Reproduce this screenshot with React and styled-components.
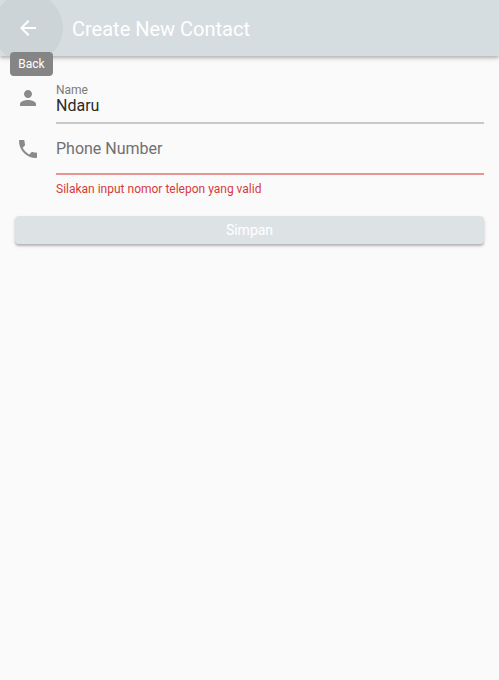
import React from "react";
import styled, { createGlobalStyle } from "styled-components";

const GlobalStyle = createGlobalStyle`
  * { box-sizing: border-box; }
  body { margin: 0; background: #fafafa; font-family: Roboto, sans-serif; }
`;

const Page = styled.div`
  min-height: 680px;
  background: #fafafa;
  overflow: hidden;
`;

const AppBar = styled.header`
  position: relative;
  display: flex;
  align-items: center;
  height: 56px;
  background: #d5dde0;
  box-shadow: 0 2px 3px rgba(0, 0, 0, 0.22), 0 3px 6px rgba(0, 0, 0, 0.08);
`;

const BarClip = styled.div`
  position: absolute;
  inset: 0;
  overflow: hidden;
`;

const Ripple = styled.span`
  position: absolute;
  left: -7px;
  top: -7px;
  width: 70px;
  height: 70px;
  border-radius: 50%;
  background: #ccd4d7;
`;

const BackButton = styled.button`
  position: relative;
  display: flex;
  align-items: center;
  justify-content: center;
  width: 56px;
  height: 56px;
  padding: 0;
  border: 0;
  background: none;
  color: #fff;
`;

const Title = styled.h1`
  position: relative;
  margin: 2px 0 0 16px;
  font-size: 20px;
  line-height: 24px;
  font-weight: 400;
  color: #fff;
`;

const Tooltip = styled.span`
  position: absolute;
  left: 10px;
  top: 52px;
  width: 43px;
  height: 24px;
  border-radius: 4px;
  background: #858585;
  color: #fff;
  font-size: 12px;
  line-height: 24px;
  text-align: center;
`;

const Form = styled.form`
  display: flex;
  flex-direction: column;
  padding: 26px 15px 0 16px;
`;

const Field = styled.div`
  display: grid;
  grid-template-columns: 24px 1fr;
  column-gap: 16px;
  height: ${(p) => p.$height};
`;

const FieldIcon = styled.span`
  display: flex;
  height: 24px;
  margin-top: 4px;
  color: #8a8a8a;
`;

const FieldBody = styled.div`
  display: flex;
  flex-direction: column;
`;

const InputBox = styled.div`
  display: flex;
  flex-direction: column;
  height: 42px;
  border-bottom: 2px solid ${(p) => p.$line};
`;

const Label = styled.label`
  font-size: 12px;
  line-height: 16px;
  color: #7a7a7a;
`;

const Value = styled.span`
  font-size: 16px;
  line-height: 16px;
  color: #2a2a2a;
`;

const Placeholder = styled.span`
  padding-top: 6px;
  font-size: 16px;
  line-height: 20px;
  color: #707070;
`;

const ErrorText = styled.p`
  margin: 6px 0 0;
  font-size: 12px;
  line-height: 16px;
  color: #d63a3a;
`;

const SaveButton = styled.button`
  height: 28px;
  margin-left: -1px;
  padding: 0;
  border: 0;
  border-radius: 4px;
  background: #dde3e5;
  color: #fff;
  font: 400 14px/28px Roboto, sans-serif;
  box-shadow: 0 2px 2px rgba(0, 0, 0, 0.2), 0 2px 4px rgba(0, 0, 0, 0.1);
`;

const Icon = ({ d }) => (
  <svg width="24" height="24" viewBox="0 0 24 24" fill="currentColor" aria-hidden="true">
    <path d={d} />
  </svg>
);

const ARROW = "M20 11H7.83l5.59-5.59L12 4l-8 8 8 8 1.41-1.41L7.83 13H20v-2z";
const PERSON =
  "M12 12c2.21 0 4-1.79 4-4s-1.79-4-4-4-4 1.79-4 4 1.79 4 4 4zm0 2c-2.67 0-8 1.34-8 4v2h16v-2c0-2.66-5.33-4-8-4z";
const PHONE =
  "M6.62 10.79c1.44 2.83 3.76 5.14 6.59 6.59l2.2-2.2c.27-.27.67-.36 1.02-.24 1.12.37 2.33.57 3.57.57.55 0 1 .45 1 1V20c0 .55-.45 1-1 1-9.39 0-17-7.61-17-17 0-.55.45-1 1-1h3.5c.55 0 1 .45 1 1 0 1.25.2 2.45.57 3.57.11.35.03.74-.25 1.02l-2.2 2.2z";

export default function App() {
  return (
    <Page>
      <GlobalStyle />
      <AppBar>
        <BarClip>
          <Ripple />
        </BarClip>
        <BackButton aria-label="Back">
          <Icon d={ARROW} />
        </BackButton>
        <Title>Create New Contact</Title>
        <Tooltip>Back</Tooltip>
      </AppBar>
      <Form>
        <Field $height="51px">
          <FieldIcon>
            <Icon d={PERSON} />
          </FieldIcon>
          <FieldBody>
            <InputBox $line="#c8c8c8">
              <Label>Name</Label>
              <Value>Ndaru</Value>
            </InputBox>
          </FieldBody>
        </Field>
        <Field $height="83px">
          <FieldIcon>
            <Icon d={PHONE} />
          </FieldIcon>
          <FieldBody>
            <InputBox $line="#e89594">
              <Placeholder>Phone Number</Placeholder>
            </InputBox>
            <ErrorText>Silakan input nomor telepon yang valid</ErrorText>
          </FieldBody>
        </Field>
        <SaveButton type="button">Simpan</SaveButton>
      </Form>
    </Page>
  );
}
